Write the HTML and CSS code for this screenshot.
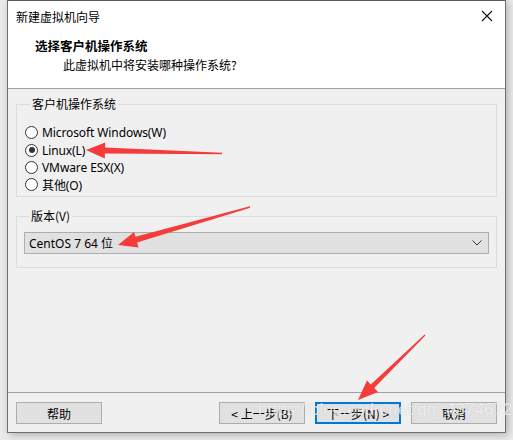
FILE: index.html
```html
<!DOCTYPE html>
<html>
<head>
<meta charset="utf-8">
<link rel="stylesheet" href="styles.css">
</head>
<body>
<div class="window">
  <div class="titlebar">
    <span class="title">新建虚拟机向导</span>
    <svg class="close" width="12" height="12" viewBox="0 0 12 12"><path d="M1 1L11 11M11 1L1 11" stroke="#111" stroke-width="1.1" fill="none"/></svg>
  </div>
  <div class="header">
    <div class="h-title">选择客户机操作系统</div>
    <div class="h-sub">此虚拟机中将安装哪种操作系统?</div>
  </div>
  <div class="content">
    <fieldset class="group g1">
      <legend>客户机操作系统</legend>
      <div class="radio"><span class="dot"></span>Microsoft Windows(W)</div>
      <div class="radio checked"><span class="dot"></span>Linux(L)</div>
      <div class="radio"><span class="dot"></span>VMware ESX(X)</div>
      <div class="radio"><span class="dot"></span>其他(O)</div>
    </fieldset>
    <fieldset class="group g2">
      <legend>版本(V)</legend>
      <div class="combo">
        <span>CentOS 7 64 位</span>
        <svg width="10" height="6" viewBox="0 0 10 6"><path d="M0.5 0.5L5 5L9.5 0.5" stroke="#333" stroke-width="1" fill="none"/></svg>
      </div>
    </fieldset>
  </div>
  <div class="footer">
    <button class="btn">帮助</button>
    <div class="spacer"></div>
    <button class="btn">&lt; 上一步(B)</button>
    <button class="btn default">下一步(N) &gt;</button>
    <button class="btn">取消</button>
  </div>
</div>
<div class="watermark">https://blog.csdn.net/qq_43746721</div>
<svg class="arrows" width="513" height="440" viewBox="0 0 513 440">
  <polygon fill="#f63b3b" points="86,150 105.2,142.5 105.1,147.5 222,152.8 222,154.2 104.9,153.5 104.8,158.5"/>
  <polygon fill="#f63b3b" points="118,245 134.1,232 135.5,236.8 249.8,206.3 250.2,207.7 137.1,242.6 138.5,247.4"/>
  <polygon fill="#f63b3b" points="358,400 367,380.4 370.8,384.4 424.6,334.6 425.4,335.4 374.2,388 378,392"/>
</svg>
</body>
</html>
```
FILE: styles.css
```css
html, body {
  margin: 0;
  padding: 0;
}
body {
  width: 513px;
  height: 440px;
  background: #ebebeb;
  font-family: "Noto Sans", "Noto Sans CJK SC", sans-serif;
  font-size: 12px;
  color: #000;
  position: relative;
  overflow: hidden;
}
.window {
  margin-left: 7px;
  width: 499px;
  height: 433px;
  border: 1px solid #6e6e6e;
  border-top-color: #5a5a5a;
  background: #f0f0f0;
  display: flex;
  flex-direction: column;
  box-shadow: 2px 2px 8px rgba(0,0,0,0.25);
  box-sizing: border-box;
}
.titlebar {
  height: 30px;
  background: #fff;
  display: flex;
  align-items: center;
  padding-left: 8px;
  padding-right: 12px;
  flex-shrink: 0;
}
.title {
  flex: 1;
  font-family: "Noto Sans CJK SC", sans-serif;
  font-size: 12px;
}
.close {
  display: block;
}
.header {
  height: 57px;
  background: #fff;
  border-bottom: 1px solid #a0a0a0;
  flex-shrink: 0;
  font-family: "Noto Sans CJK SC", sans-serif;
}
.h-title {
  font-weight: bold;
  font-size: 12.5px;
  padding-left: 27px;
  padding-top: 6px;
  line-height: 18px;
}
.h-sub {
  padding-left: 55px;
  font-size: 12px;
  line-height: 20px;
}
.content {
  flex: 1;
  padding: 7px 8px 0 8px;
}
.group {
  margin: 0;
  border: 1px solid #dcdcdc;
  padding: 0;
  min-width: 0;
}
.group legend {
  padding: 0 2px;
  margin-left: 5px;
  font-family: "Noto Sans CJK SC", sans-serif;
  line-height: 16px;
}
.g1 {
  height: 101px;
  padding: 12px 0 0 8px;
  box-sizing: border-box;
}
.radio {
  display: flex;
  align-items: center;
  height: 17.4px;
  font-family: "Noto Sans", "Noto Sans CJK SC", sans-serif;
  letter-spacing: -0.1px;
}
.dot {
  width: 11px;
  height: 11px;
  border: 1px solid #333;
  border-radius: 50%;
  background: #fff;
  margin-right: 4px;
  display: flex;
  align-items: center;
  justify-content: center;
  flex-shrink: 0;
}
.checked .dot::after {
  content: "";
  width: 6px;
  height: 6px;
  border-radius: 50%;
  background: #333;
}
.g2 {
  margin-top: 11px;
  height: 60px;
  padding: 8px 7px 0 7px;
  box-sizing: border-box;
}
.combo {
  height: 22px;
  box-sizing: border-box;
  background: #e1e1e1;
  border: 1px solid #adadad;
  display: flex;
  align-items: center;
  justify-content: space-between;
  padding: 0 6px 0 4px;
  font-size: 12px;
}
.footer {
  flex-shrink: 0;
  border-top: 1px solid #a0a0a0;
  height: 40px;
  box-sizing: border-box;
  display: flex;
  align-items: flex-start;
  padding: 9px 8px 0 8px;
  gap: 10px;
}
.spacer {
  flex: 1;
}
.btn {
  width: 86px;
  height: 22px;
  background: #e1e1e1;
  border: 1px solid #adadad;
  font-family: "Noto Sans CJK SC", sans-serif;
  font-size: 12px;
  padding: 0;
  color: #000;
}
.btn.default {
  border: 2px solid #0078d7;
}
.watermark {
  position: absolute;
  left: 258px;
  top: 400px;
  font-family: "Liberation Sans", sans-serif;
  font-size: 17px;
  color: rgba(255,255,255,0.7);
  text-shadow: 0 0 1px rgba(120,120,120,0.3);
  letter-spacing: 0.1px;
  white-space: nowrap;
}
.arrows {
  position: absolute;
  left: 0;
  top: 0;
  pointer-events: none;
}
```
